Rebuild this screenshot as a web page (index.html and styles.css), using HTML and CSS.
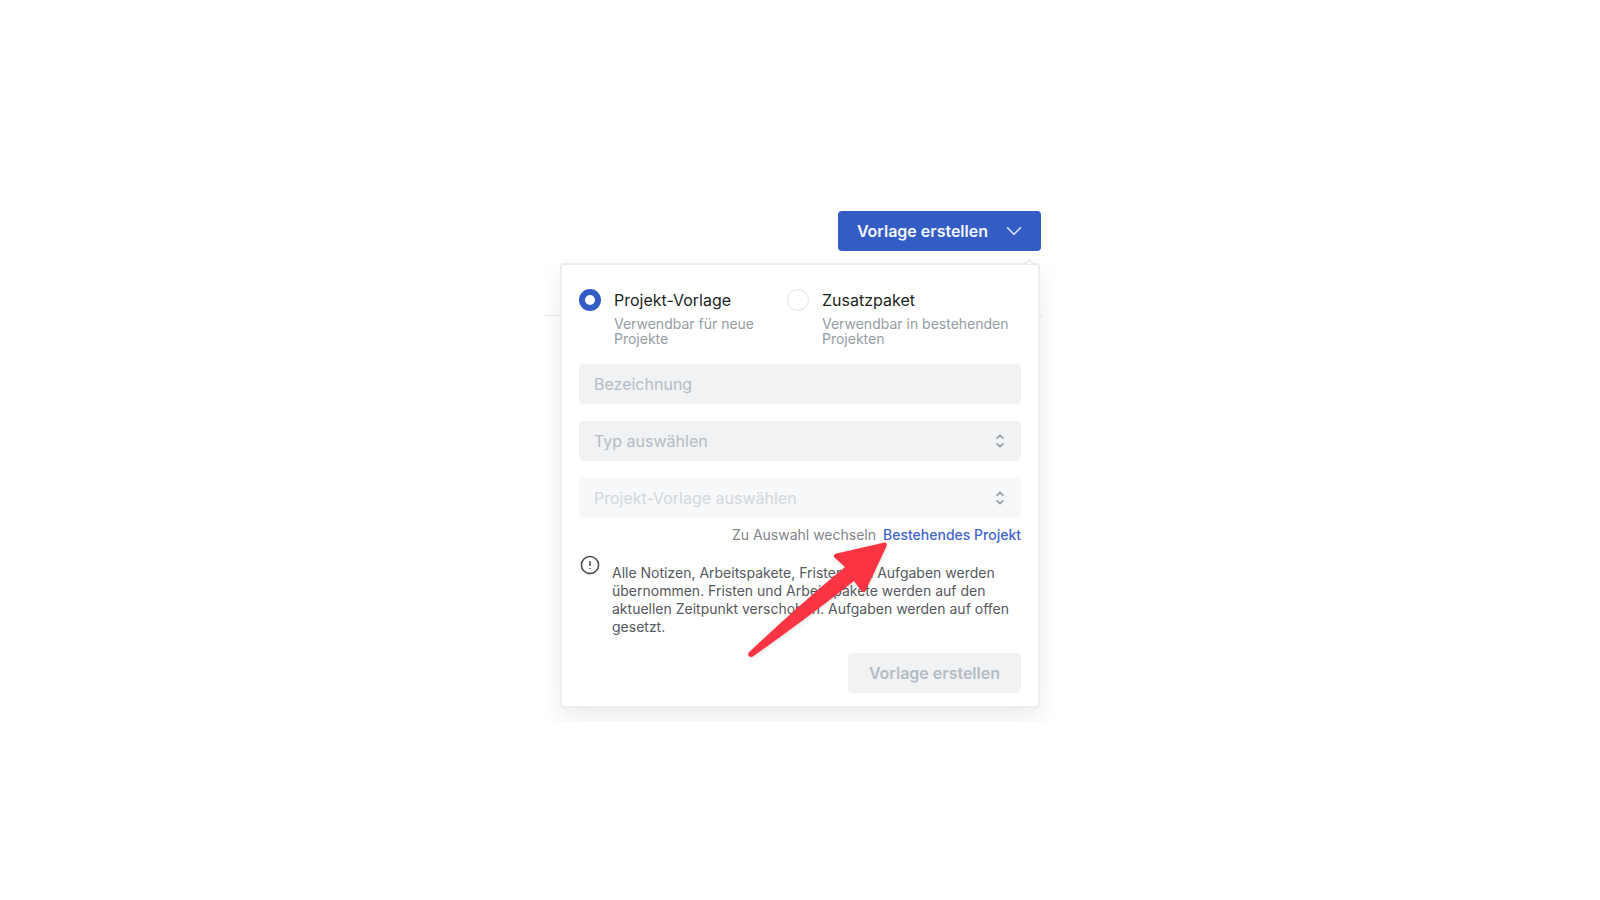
FILE: index.html
```html
<!DOCTYPE html>
<html lang="de">
<head>
    <meta charset="UTF-8">
    <meta name="viewport" content="width=device-width, initial-scale=1.0">
    <title>Vorlage erstellen</title>
    <link rel="stylesheet" href="styles.css">
</head>
<body>

    <main class="stage">
        <header class="toolbar">
            <button type="button" class="btn btn-primary" aria-expanded="true">
                Vorlage erstellen
                <svg class="chevron" viewBox="0 0 16 10" aria-hidden="true"><path d="M1 1.2 L8 8.2 L15 1.2"/></svg>
            </button>
        </header>

        <div class="content">
            <form class="popover">
                <svg class="caret" viewBox="0 0 12 6" aria-hidden="true"><path d="M0 5 L1.5 5 L6 1 L10.5 5 L12 5"/></svg>

                <div class="options">
                    <div class="option">
                        <input type="radio" name="art" id="projektVorlage" checked>
                        <label for="projektVorlage">
                            <span class="option-title">Projekt-Vorlage</span>
                            <span class="option-text">Verwendbar für neue Projekte</span>
                        </label>
                    </div>
                    <div class="option">
                        <input type="radio" name="art" id="zusatzpaket">
                        <label for="zusatzpaket">
                            <span class="option-title">Zusatzpaket</span>
                            <span class="option-text">Verwendbar in bestehenden Projekten</span>
                        </label>
                    </div>
                </div>

                <div class="fields">
                    <input type="text" class="field" placeholder="Bezeichnung" aria-label="Bezeichnung">
                    <div class="select">
                        <select class="field" aria-label="Typ auswählen">
                            <option>Typ auswählen</option>
                        </select>
                        <svg class="updown" viewBox="0 0 10 14" aria-hidden="true"><path d="M1.5 4.7 L5 1.4 L8.5 4.7 M1.5 9.3 L5 12.6 L8.5 9.3"/></svg>
                    </div>
                    <div class="select">
                        <select class="field" aria-label="Projekt-Vorlage auswählen" disabled>
                            <option>Projekt-Vorlage auswählen</option>
                        </select>
                        <svg class="updown" viewBox="0 0 10 14" aria-hidden="true"><path d="M1.5 4.7 L5 1.4 L8.5 4.7 M1.5 9.3 L5 12.6 L8.5 9.3"/></svg>
                    </div>
                </div>

                <div class="switch">
                    <span>Zu Auswahl wechseln</span>
                    <a href="#">Bestehendes Projekt</a>
                </div>

                <div class="hint">
                    <svg class="info" viewBox="0 0 20 20" aria-hidden="true">
                        <circle cx="10" cy="10" r="8.6"/>
                        <path d="M10 6 V11"/>
                        <path d="M10 12.9 V14.1"/>
                    </svg>
                    <p>Alle Notizen, Arbeitspakete, Fristen und Aufgaben werden übernommen. Fristen und Arbeitspakete werden auf den aktuellen Zeitpunkt verschoben. Aufgaben werden auf offen gesetzt.</p>
                </div>

                <div class="actions">
                    <button type="submit" class="btn" disabled>Vorlage erstellen</button>
                </div>

                <!-- arrow pointing at the switch link -->
                <svg class="arrow" viewBox="0 0 140 118" aria-hidden="true">
                    <path d="M136.500 2.500 L87.500 13.800 Q84.500 15.500 86.800 17.800 L97 27 Q50 66 0.800 112.500 Q-0.500 114.500 1 116.200 Q3 117.800 5.200 116.200 Q58 79 106 41 L113.500 51 Q116 53.200 117.800 50.500 L138.600 6 Q139.500 2 136.500 2.500 Z"/>
                </svg>
            </form>
        </div>
    </main>

</body>
</html>
```

FILE: styles.css
```css
* {
    box-sizing: border-box;
}

body {
    margin: 0;
    min-height: 100vh;
    display: flex;
    align-items: center;
    justify-content: center;
    background-color: #fff;
    color: #1d1f22;
    font-family: Inter, 'Liberation Sans', sans-serif;
    font-size: 16px;
}

.stage {
    width: 100%;
    max-width: 510px;
    padding: 33px 14px 14px 15px;
    overflow: hidden; /* cuts off the popover shadow */
}

.toolbar {
    display: flex;
    justify-content: flex-end;
    margin-bottom: 12px;
}

.btn {
    display: flex;
    align-items: center;
    gap: 18px;
    height: 40px;
    padding: 0 21px;
    border: none;
    border-radius: 4px;
    font-family: inherit;
    font-size: 16px;
    font-weight: 600;
    background-color: #f0f2f4;
    color: #b4bcc5;
}

.btn-primary {
    padding: 0 19px;
    background-color: #335cc5;
    color: #f3f6fd;
    cursor: pointer;
}

.chevron {
    width: 16px;
    height: 10px;
    fill: none;
    stroke: #e6ecfa;
    stroke-width: 1.4;
}

.content {
    position: relative;
    padding-right: 1px;
}

/* rule of the page behind the popover */
.content::before {
    content: '';
    position: absolute;
    top: 52px;
    left: -15px;
    right: -1px;
    height: 1px;
    background-color: #e6e7e9;
}

.popover {
    position: relative;
    padding: 24px 17px 13px;
    border: 2px solid #e9edf1;
    border-radius: 4px;
    background-color: #fff;
    box-shadow: 0 10px 24px rgba(0, 0, 0, 0.08);
}

.caret {
    position: absolute;
    top: -6px;
    right: 3px;
    width: 12px;
    height: 6px;
    fill: #fff;
    stroke: #e2e6ea;
    stroke-width: 1.5;
}

.options {
    display: grid;
    grid-template-columns: 8fr 9fr;
    margin-bottom: 18px;
}

.option {
    display: flex;
    gap: 13px;
}

.option input {
    appearance: none;
    flex: none;
    width: 22px;
    height: 22px;
    margin: 0;
    border: 1px solid #dfe2e6;
    border-radius: 50%;
    background-color: #fff;
}

.option input:checked {
    border: 6px solid #335cc5;
}

.option-title,
.option-text {
    display: block;
}

.option-title {
    line-height: 22px;
    margin-bottom: 5px;
}

.option-text {
    font-size: 14px;
    line-height: 15px;
    color: #969da5;
}

.fields {
    display: grid;
    gap: 17px;
}

.field {
    display: block;
    width: 100%;
    height: 40px;
    padding: 0 15px;
    border: none;
    border-radius: 4px;
    background-color: #f0f2f4;
    color: #b4bcc5;
    font-family: inherit;
    font-size: 16px;
}

.field::placeholder {
    color: #b4bcc5;
}

.field:disabled {
    background-color: #f6f8fa;
    color: #d3d7db;
    opacity: 1;
}

.select {
    position: relative;
}

.select select {
    appearance: none;
}

.updown {
    position: absolute;
    top: 13px;
    right: 16px;
    width: 10px;
    height: 14px;
    fill: none;
    stroke: #8f979f;
    stroke-width: 1.5;
    pointer-events: none;
}

.switch {
    display: flex;
    justify-content: flex-end;
    gap: 7px;
    padding: 8px 0;
    font-size: 14px;
    line-height: 18px;
    color: #7f858b;
}

.switch a {
    color: #3f66cc;
    font-weight: 500;
    text-decoration: none;
}

.hint {
    display: flex;
    gap: 12px;
    padding-left: 1px;
    margin-top: 3px;
    font-size: 14px;
    line-height: 18px;
    color: #55595e;
}

.hint p {
    margin: 9px 0 17px;
}

.info {
    flex: none;
    width: 20px;
    height: 20px;
    fill: none;
    stroke: #45484c;
    stroke-width: 1.5;
}

.actions {
    display: flex;
    justify-content: flex-end;
}

.arrow {
    position: absolute;
    right: 150px;
    bottom: 48px;
    width: 140px;
    height: 118px;
    fill: #fa3442;
    filter: drop-shadow(0 1px 2px rgba(0, 0, 0, 0.15));
}
```
